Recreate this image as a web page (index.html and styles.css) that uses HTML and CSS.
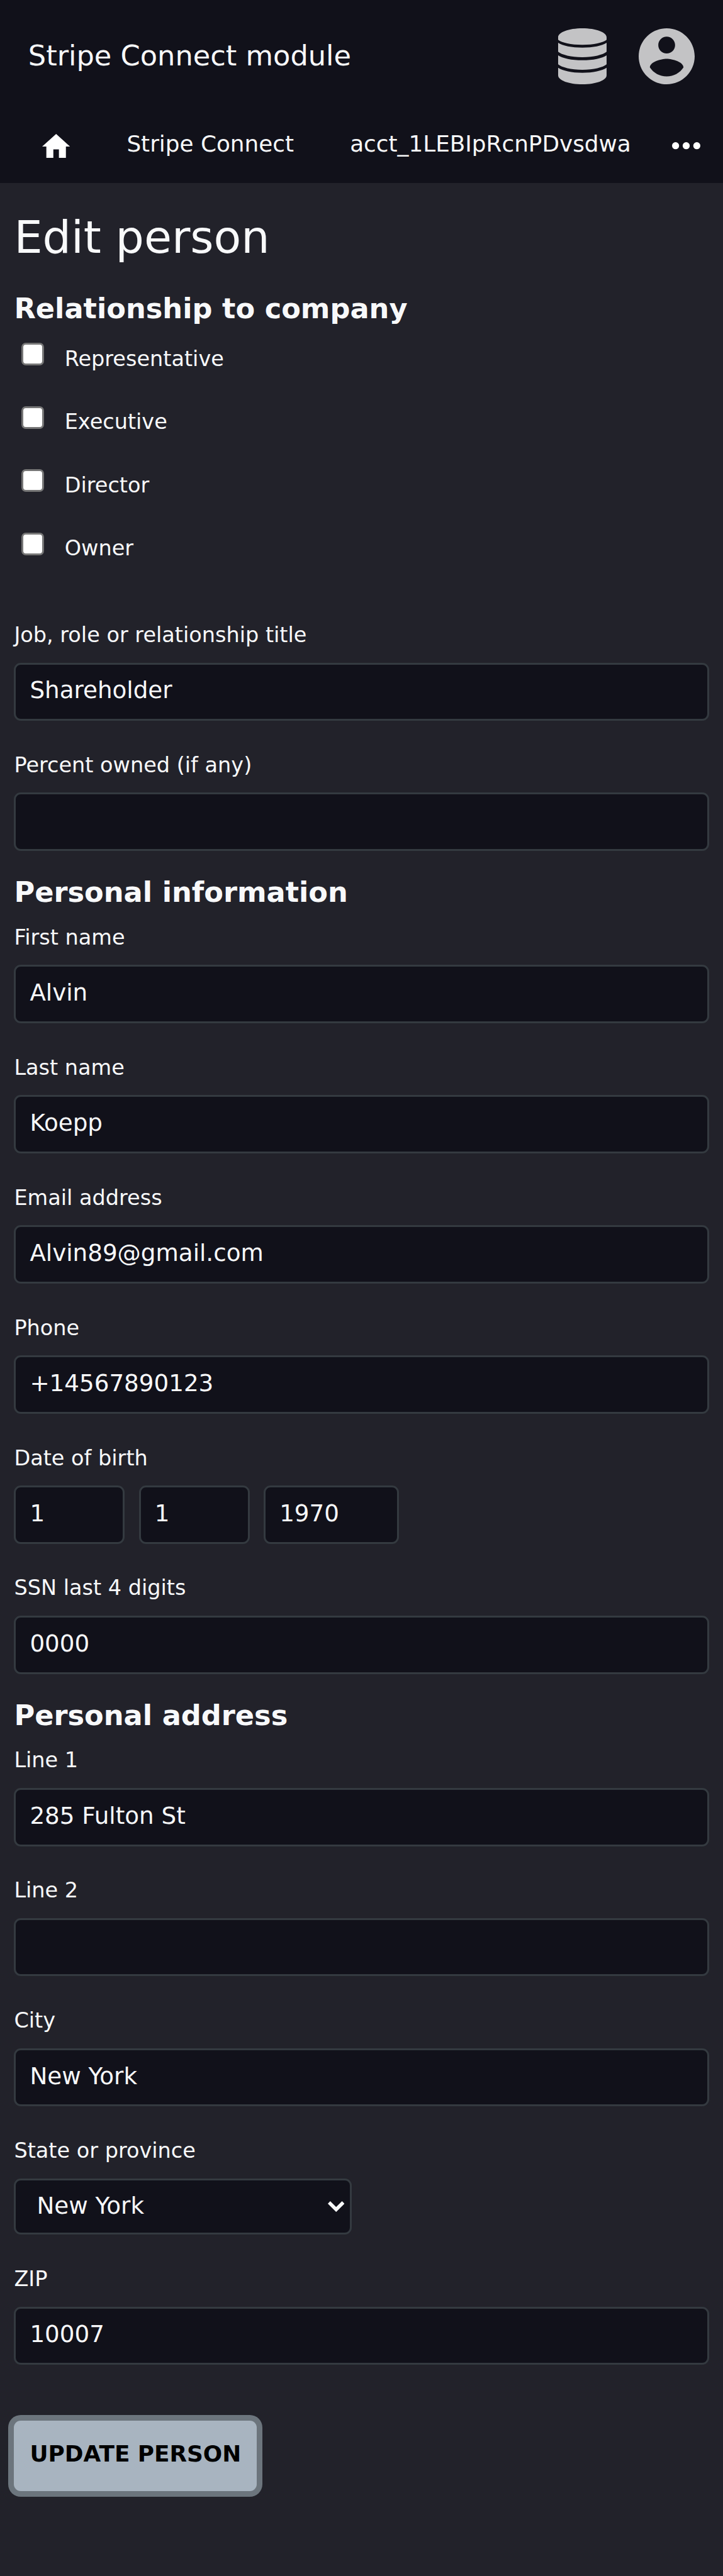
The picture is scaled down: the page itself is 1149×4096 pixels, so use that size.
FILE: index.html
```html
<!DOCTYPE html>
<html lang="en">
<head>
<meta charset="utf-8">
<title>Edit person</title>
<link rel="stylesheet" href="styles.css">
</head>
<body>
<header class="header">
  <div class="topbar">
    <span class="brand">Stripe Connect module</span>
    <svg class="icon-db" viewBox="0 0 97 112" preserveAspectRatio="none"><path d="M0 18C0 8 21 0 48.500 0S97 8 97 18V23C90 29 71 33 48.500 33S7 29 0 23ZM0 29C9 35 27 38.700 48.500 38.700S88 35 97 29V47C90 53 71 58 48.500 58S7 53 0 47ZM0 54C9 60 27 64 48.500 64S88 60 97 54V72C90 78 71 83 48.500 83S7 78 0 72ZM0 79C9 85 27 89 48.500 89S88 85 97 79V94C97 104 76 112 48.500 112S0 104 0 94Z"/></svg>
    <svg class="icon-user" viewBox="2 2 20 20"><path d="M12 2C6.480 2 2 6.480 2 12s4.480 10 10 10 10-4.480 10-10S17.520 2 12 2zm0 3c1.660 0 3 1.340 3 3s-1.340 3-3 3-3-1.340-3-3 1.340-3 3-3zm0 14.200c-2.500 0-4.710-1.280-6-3.220.030-1.990 4-3.080 6-3.080 1.990 0 5.970 1.090 6 3.080-1.290 1.940-3.500 3.220-6 3.220z"/></svg>
  </div>
  <nav class="nav">
    <svg class="icon-home" viewBox="2 3 20 17" preserveAspectRatio="none"><path d="M10 20v-6h4v6h5v-8h3L12 3 2 12h3v8z"/></svg>
    <a class="link-home">Stripe Connect</a>
    <a class="link-account">acct_1LEBIpRcnPDvsdwa</a>
    <svg class="icon-more" viewBox="0 0 56 14"><circle cx="7" cy="7" r="7"/><circle cx="28" cy="7" r="7"/><circle cx="49" cy="7" r="7"/></svg>
  </nav>
</header>
<main class="main">
  <h1 class="title">Edit person</h1>
  <h2 class="heading heading-first">Relationship to company</h2>
  <div class="checks">
    <label class="check"><input type="checkbox" class="box"><span>Representative</span></label>
    <label class="check"><input type="checkbox" class="box"><span>Executive</span></label>
    <label class="check"><input type="checkbox" class="box"><span>Director</span></label>
    <label class="check"><input type="checkbox" class="box"><span>Owner</span></label>
  </div>
  <div class="field"><label class="label">Job, role or relationship title</label><input class="input" value="Shareholder"></div>
  <div class="field"><label class="label">Percent owned (if any)</label><input class="input" value=""></div>
  <h2 class="heading">Personal information</h2>
  <div class="field"><label class="label">First name</label><input class="input" value="Alvin"></div>
  <div class="field"><label class="label">Last name</label><input class="input" value="Koepp"></div>
  <div class="field"><label class="label">Email address</label><input class="input" value="Alvin89@gmail.com"></div>
  <div class="field"><label class="label">Phone</label><input class="input" value="+14567890123"></div>
  <div class="field"><label class="label">Date of birth</label>
    <div class="date"><input class="input day" value="1"><input class="input day" value="1"><input class="input year" value="1970"></div>
  </div>
  <div class="field"><label class="label">SSN last 4 digits</label><input class="input" value="0000"></div>
  <h2 class="heading">Personal address</h2>
  <div class="field"><label class="label">Line 1</label><input class="input" value="285 Fulton St"></div>
  <div class="field"><label class="label">Line 2</label><input class="input" value=""></div>
  <div class="field"><label class="label">City</label><input class="input" value="New York"></div>
  <div class="field field-select"><label class="label">State or province</label>
    <div class="select"><span>New York</span><svg class="chevron" viewBox="0 0 33 21.500"><path d="M0 5 4.800 0 16.500 11.700 28.200 0 33 5 16.500 21.500Z"/></svg></div>
  </div>
  <div class="field"><label class="label">ZIP</label><input class="input" value="10007"></div>
  <button class="button">UPDATE PERSON</button>
</main>
</body>
</html>
```
FILE: styles.css
```css
* { box-sizing: border-box; }
body {
  margin: 0;
  height: 4096px;
  background: #22222a;
  color: #f8f9fa;
  font-family: "DejaVu Sans", sans-serif;
  font-size: 33.5px;
}
.header { height: 291px; background: #11111a; }
.topbar { display: flex; align-items: center; height: 179px; padding: 0 45px 0 44.800px; }
.brand { flex: 1; padding-bottom: 1px; font-size: 44.7px; }
.icon-db, .icon-user { fill: #c3c3c5; }
.icon-db { width: 77px; height: 89px; }
.icon-user { width: 89px; height: 89px; margin-left: 51px; }
.nav { display: flex; align-items: center; height: 101px; font-size: 35.8px; }
.nav a { padding-bottom: 3px; }
.icon-home { width: 44.400px; height: 38px; margin: 5px 90px 0 67px; fill: #fff; }
.link-home { width: 354.800px; }
.link-account { flex: 1; }
.icon-more { width: 45px; height: 11.400px; margin: 5px 36.500px 0 0; fill: #fff; }
.main { padding: 0 22.4px; }
.title { margin: 0; padding-top: 45px; height: 167px; font-size: 71.5px; font-weight: 400; line-height: 84px; }
.heading { margin: 0; height: 67.100px; font-size: 44.7px; font-weight: 700; line-height: 57px; }
.heading-first { line-height: 67px; }
.checks { height: 452.500px; padding-top: 20px; }
.check { display: flex; height: 100.600px; line-height: 40px; }
.box {
  appearance: none;
  width: 36px;
  height: 36px;
  margin: 0 33px 0 11.300px;
  border: 3px solid #767676;
  border-radius: 7px;
  background: #fff;
}
.check span { padding-top: 5.500px; }
.field { height: 206.900px; }
.label { display: block; height: 76px; padding-top: 12.500px; line-height: 40px; }
.input, .select {
  display: block;
  width: 100%;
  height: 92.700px;
  padding: 0 22px 5px;
  border: 3px solid #343a40;
  border-radius: 11px;
  background: #11111a;
  color: #f8f9fa;
  font: 37.260px "DejaVu Sans", sans-serif;
}
.date { display: flex; gap: 22.400px; }
.day { width: 176px; }
.year { width: 215px; }
.field-select { height: 204px; }
.select { display: flex; align-items: center; justify-content: space-between; width: 537px; height: 89.500px; padding: 0 9px 3px 33px; }
.chevron { width: 26.400px; height: 17.200px; margin-top: 4px; fill: #f8f9fa; }
.button {
  display: block;
  width: 386px;
  height: 112px;
  margin-top: 50.500px;
  padding: 0 0 7px;
  border: 0;
  border-radius: 11px;
  background: #a8b4c0;
  box-shadow: 0 0 0 9px #6c757d;
  color: #000;
  font: 700 35.800px "DejaVu Sans", sans-serif;
}
```
